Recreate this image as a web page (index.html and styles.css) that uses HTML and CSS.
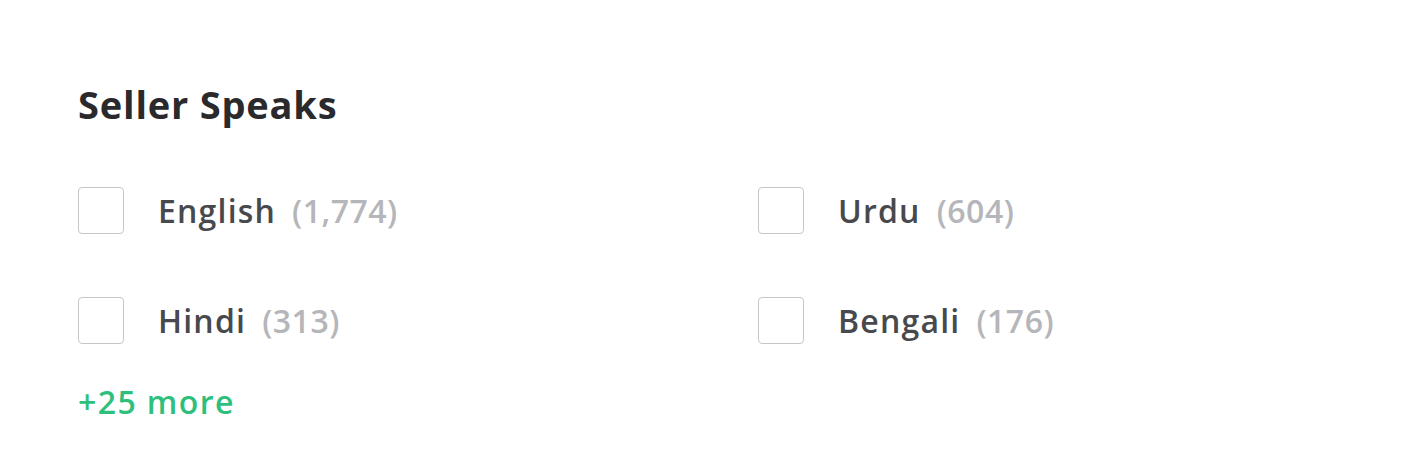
FILE: index.html
```html
<!DOCTYPE html>
<html lang="en">
<head>
<meta charset="utf-8">
<title>Seller Speaks</title>
<link rel="stylesheet" href="styles.css">
</head>
<body>
<section class="filter">
  <h2 class="filter-title">Seller Speaks</h2>
  <div class="options">
    <label class="option"><span class="box"></span><span class="name">English</span><span class="count">(1,774)</span></label>
    <label class="option"><span class="box"></span><span class="name">Urdu</span><span class="count">(604)</span></label>
    <label class="option"><span class="box"></span><span class="name">Hindi</span><span class="count">(313)</span></label>
    <label class="option"><span class="box"></span><span class="name">Bengali</span><span class="count">(176)</span></label>
  </div>
  <a class="more" href="#">+25 more</a>
</section>
</body>
</html>
```
FILE: styles.css
```css
html, body {
  margin: 0;
  background: #ffffff;
}
body {
  font-family: "Open Sans", "Liberation Sans", sans-serif;
  width: 1422px;
  height: 458px;
  overflow: hidden;
}
.filter {
  padding: 80px 0 0 78px;
}
.filter-title {
  margin: 0;
  font-size: 38px;
  line-height: 48px;
  font-weight: 700;
  letter-spacing: 0.8px;
  color: #2a2a2c;
}
.options {
  display: grid;
  grid-template-columns: 680px 680px;
  grid-auto-rows: 110px;
  margin-top: 59px;
}
.option {
  display: flex;
  align-items: flex-start;
  height: 110px;
}
.box {
  width: 44px;
  height: 45px;
  border: 1px solid #c5c6c9;
  border-radius: 4px;
  box-sizing: content-box;
  margin-right: 34px;
  flex: none;
}
.name,
.count {
  font-size: 32px;
  line-height: 47px;
  font-weight: 600;
}
.name {
  color: #48494d;
  letter-spacing: 1.2px;
  margin-right: 16px;
}
.count {
  color: #b5b6ba;
  letter-spacing: 0.5px;
}
.more {
  display: block;
  margin-top: -29px;
  font-size: 32px;
  line-height: 48px;
  font-weight: 600;
  letter-spacing: 1.4px;
  color: #2fbf7c;
  text-decoration: none;
}
```
